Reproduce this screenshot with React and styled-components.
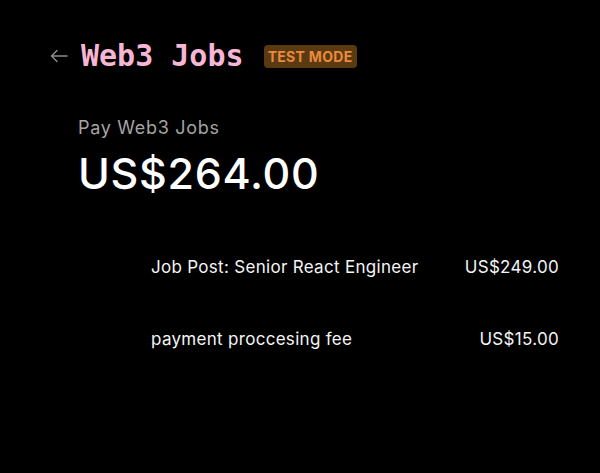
import React from 'react';
import styled, { createGlobalStyle } from 'styled-components';

const GlobalStyle = createGlobalStyle`
  html, body {
    margin: 0;
    padding: 0;
    background: #000;
  }
  body {
    font-family: Inter, "Noto Sans", sans-serif;
    color: #f2f2f2;
  }
`;

const Page = styled.div`
  width: 600px;
  height: 473px;
  box-sizing: border-box;
  padding: 38px 0 0 50px;
  background: #000;
`;

const Header = styled.div`
  display: flex;
  align-items: center;
  height: 36px;
`;

const BackButton = styled.button`
  display: flex;
  align-items: center;
  padding: 0;
  margin: 0 13px 0 0;
  border: none;
  background: none;
  color: #8a8a8a;
  cursor: pointer;
`;

const Title = styled.h1`
  margin: 0;
  font-family: "DejaVu Sans Mono", "Liberation Mono", monospace;
  font-weight: 700;
  font-size: 30px;
  line-height: 36px;
  color: #f7b6d4;
`;

const Badge = styled.span`
  margin-left: 20px;
  display: inline-flex;
  align-items: center;
  justify-content: center;
  width: 93px;
  height: 23px;
  box-sizing: border-box;
  border-radius: 4px;
  background: #5a3a10;
  color: #ea8a3f;
  font-size: 14px;
  font-weight: 700;
  letter-spacing: 0.3px;
`;

const Summary = styled.div`
  margin: 44px 0 0 28px;
`;

const Label = styled.div`
  font-size: 18px;
  line-height: 20px;
  letter-spacing: 0.7px;
  color: #a4a4a4;
`;

const Total = styled.div`
  margin-top: 10px;
  font-size: 43px;
  line-height: 50px;
  font-weight: 500;
  letter-spacing: 0.7px;
  color: #fff;
`;

const Items = styled.div`
  margin: 59px 0 0 73px;
  width: 408px;
  display: flex;
  flex-direction: column;
  gap: 52px;
`;

const Row = styled.div`
  display: flex;
  justify-content: space-between;
  font-size: 17px;
  line-height: 20px;
  letter-spacing: 0.3px;
  color: #f4f4f4;
`;

const items = [
  { name: 'Job Post: Senior React Engineer', price: 'US$249.00' },
  { name: 'payment proccesing fee', price: 'US$15.00' },
];

const ArrowLeft = () => (
  <svg width="18" height="14" viewBox="0 0 18 14" fill="none">
    <path d="M17 7H1.5M7 1.5L1.5 7L7 12.5" stroke="currentColor" strokeWidth="1.5" strokeLinecap="round" strokeLinejoin="round" />
  </svg>
);

export default function App() {
  return (
    <Page>
      <GlobalStyle />
      <Header>
        <BackButton aria-label="Back">
          <ArrowLeft />
        </BackButton>
        <Title>Web3 Jobs</Title>
        <Badge>TEST MODE</Badge>
      </Header>
      <Summary>
        <Label>Pay Web3 Jobs</Label>
        <Total>US$264.00</Total>
        <Items>
          {items.map((item) => (
            <Row key={item.name}>
              <span>{item.name}</span>
              <span>{item.price}</span>
            </Row>
          ))}
        </Items>
      </Summary>
    </Page>
  );
}
